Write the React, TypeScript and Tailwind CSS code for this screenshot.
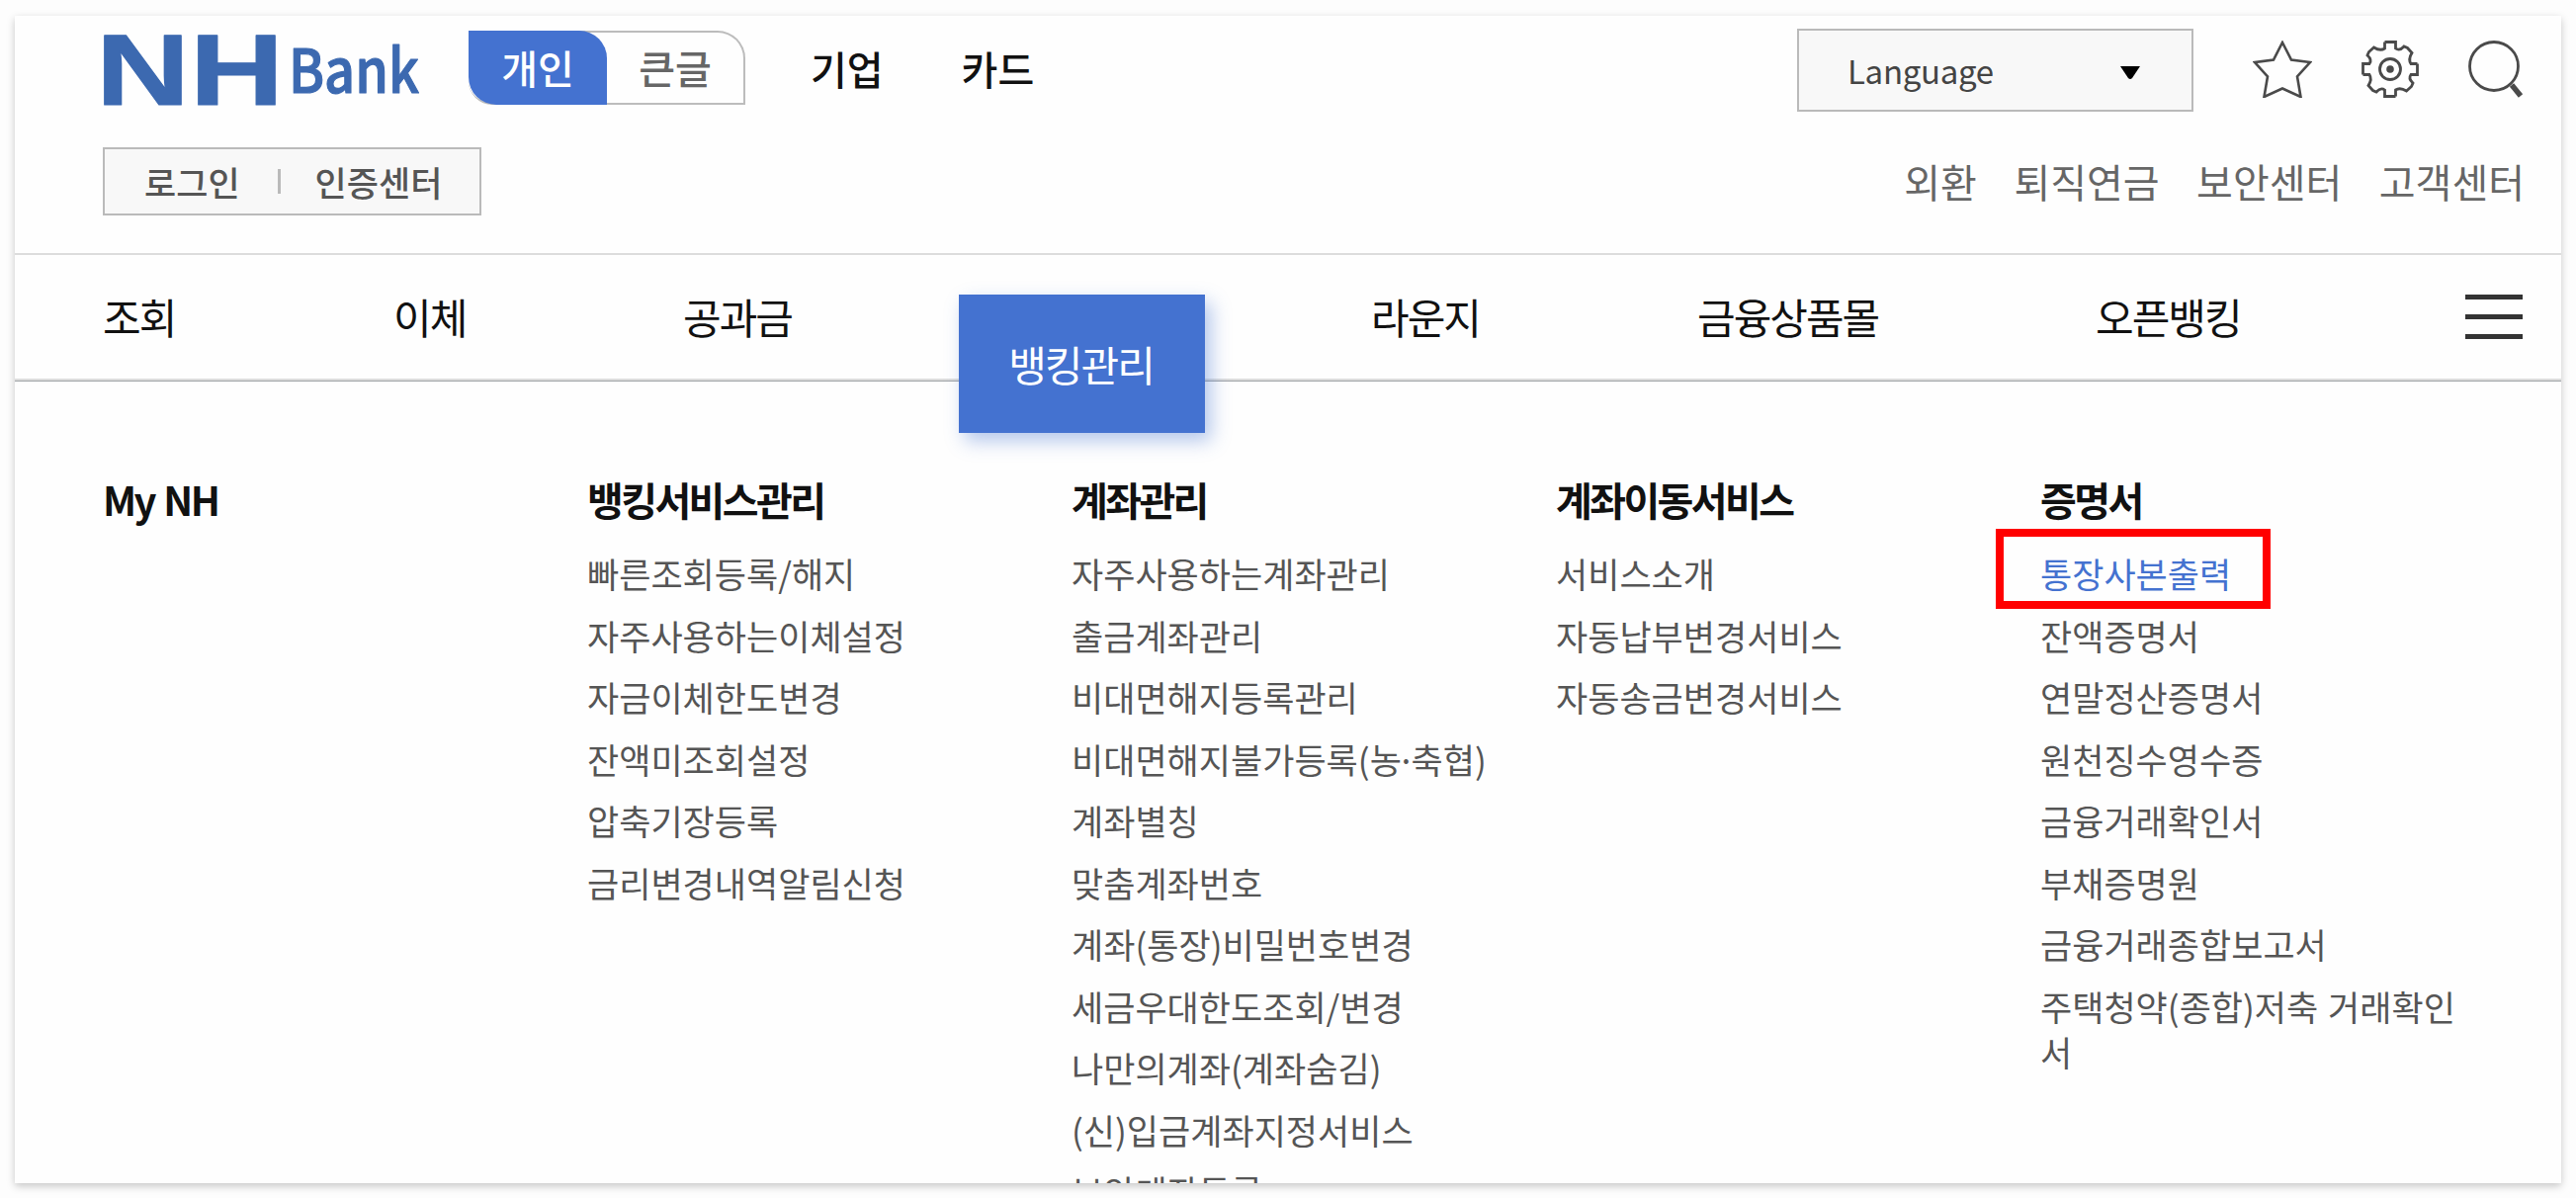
import React from 'react';

const lists = [
  { title: 'My NH', items: [] as string[] },
  {
    title: '뱅킹서비스관리',
    items: ['빠른조회등록/해지', '자주사용하는이체설정', '자금이체한도변경', '잔액미조회설정', '압축기장등록', '금리변경내역알림신청'],
  },
  {
    title: '계좌관리',
    items: [
      '자주사용하는계좌관리', '출금계좌관리', '비대면해지등록관리', '비대면해지불가등록(농·축협)', '계좌별칭', '맞춤계좌번호',
      '계좌(통장)비밀번호변경', '세금우대한도조회/변경', '나만의계좌(계좌숨김)', '(신)입금계좌지정서비스', '보안계좌등록',
    ],
  },
  { title: '계좌이동서비스', items: ['서비스소개', '자동납부변경서비스', '자동송금변경서비스'] },
  {
    title: '증명서',
    items: ['통장사본출력', '잔액증명서', '연말정산증명서', '원천징수영수증', '금융거래확인서', '부채증명원', '금융거래종합보고서', '주택청약(종합)저축 거래확인서'],
  },
];

function Logo() {
  return (
    <svg className="block h-[70px] w-[320px] overflow-visible" viewBox="0 0 320 70" fill="#3c69b0" stroke="#3c69b0" strokeLinejoin="round">
      <text x="-7" y="70" fontSize="101.7" textLength="190" lengthAdjust="spacingAndGlyphs" strokeWidth="1" className="font-['Liberation_Sans',sans-serif] font-bold">NH</text>
      <text x="188" y="57.5" fontSize="61" textLength="132" lengthAdjust="spacingAndGlyphs" strokeWidth="1.2" className="font-['Noto_Sans_CJK_KR',sans-serif] font-medium">Bank</text>
    </svg>
  );
}

const gearQuarter = 'M23.5 1.5H34.5V8Q38.5 11 43 6L46.5 7.5 51 12.5Q47 19 50 23.5H56.5';

function Gear() {
  return (
    <svg className="h-[58px] w-[58px]" viewBox="0 0 58 58" fill="none" stroke="#4a4a4a" strokeWidth="2.8">
      <path d={gearQuarter} />
      <path d={gearQuarter} transform="rotate(90 29 29)" />
      <path d={gearQuarter} transform="rotate(180 29 29)" />
      <path d={gearQuarter} transform="rotate(270 29 29)" />
      <circle cx="29" cy="29" r="10.5" />
      <circle cx="29" cy="29" r="3.8" fill="#4a4a4a" stroke="none" />
    </svg>
  );
}

function ItemText({ text }: { text: string }) {
  const [before, after] = text.split('·');
  if (after === undefined) return <>{text}</>;
  return (
    <>
      {before}
      <span className="-mx-[5px]">·</span>
      {after}
    </>
  );
}

export default function App() {
  return (
    <div className="h-[1212px] w-[2606px] overflow-hidden bg-[#fdfdfd] pl-[15px] pt-[16px] font-['Noto_Sans_CJK_KR',sans-serif] whitespace-nowrap">
      <div className="flex h-[1181px] w-[2576px] flex-col overflow-hidden bg-[#fefefe] shadow-[0_3px_8px_rgba(0,0,0,0.22)]">
        <header className="flex h-[240px] shrink-0 justify-between pl-[89px] pr-[38px]">
          <div>
            <div className="flex h-[90px] items-end">
              <Logo />
              <div className="ml-[50px] flex h-[75px] w-[280px] rounded-tr-[28px] border-2 border-l-0 border-[#bcbcbc] rounded-bl-[24px]">
                <div className="-my-0.5 flex w-[140px] items-center justify-center rounded-bl-[28px] rounded-tr-[28px] bg-[#4472d0] pb-0.5 text-[40px] font-medium leading-none text-white">개인</div>
                <div className="flex flex-1 items-center justify-center pb-0.5 text-[40px] font-medium leading-none text-[#666]">큰글</div>
              </div>
              <span className="ml-[66px] flex h-[75px] items-center text-[40px] font-medium leading-none text-[#111]">기업</span>
              <span className="ml-[79px] flex h-[75px] items-center text-[40px] font-medium leading-none text-[#111]">카드</span>
            </div>
            <div className="mt-[43px] flex h-[69px] w-[383px] items-center border-2 border-[#bababa] bg-[#f8f8f8] pl-[40px] text-[35px] font-medium leading-none text-[#555]">
              <span>로그인</span>
              <span className="ml-[38px] mr-[35px] h-[25px] w-[3px] bg-[#bababa]" />
              <span>인증센터</span>
            </div>
          </div>
          <div className="flex flex-col items-end">
            <div className="flex pt-[13px]">
              <div className="flex h-[84px] w-[401px] items-center border-2 border-[#bababa] bg-[#f8f8f8] pl-[49px] text-[33px] text-[#444]">
                <span className="w-[276px] pt-[1px] tracking-[-0.3px]">Language</span>
                <svg className="mt-[5px] h-[13px] w-5" viewBox="0 0 20 13"><path d="M0 0H20L12 12Q10 14 8 12Z" fill="#000" /></svg>
              </div>
              <div className="ml-[60px] mt-[12px] flex gap-[50px]">
                <svg className="h-[58px] w-[60px]" viewBox="0 0 60 58" fill="none" stroke="#4a4a4a" strokeWidth="2.6"><path d="M30 2L39 19.5 58 22 45 36.5 48.5 57 30 48.5 11.5 57 15 36.5 2 22 21 19.5Z" /></svg>
                <Gear />
                <svg className="h-[58px] w-[56px]" viewBox="0 0 56 58" fill="none" stroke="#4a4a4a" strokeWidth="2.8"><circle cx="26" cy="26" r="24.5" /><path d="M44 45L53 56" strokeWidth="5.5" /></svg>
              </div>
            </div>
            <div className="-mr-[1px] mt-[50px] flex gap-[37.5px] text-[40px] leading-none text-[#666]">
              <span>외환</span><span>퇴직연금</span><span>보안센터</span><span>고객센터</span>
            </div>
          </div>
        </header>
        <nav className="flex h-[129px] shrink-0 border-y-2 border-[#dcdcdc] shadow-[0_1px_0_#a0a4a8] pl-[89px] text-[42px] leading-[124px] tracking-[-2px] text-[#111]">
          <span className="w-[294px]">조회</span>
          <span className="w-[293px]">이체</span>
          <span className="w-[279px]">공과금</span>
          <span className="z-10 mt-[40px] h-[140px] w-[249px] shrink-0 bg-[#4472d0] pr-[2px] text-center leading-[140px] text-white shadow-[6px_8px_18px_rgba(68,114,208,0.4)]">뱅킹관리</span>
          <span className="ml-[168px] w-[330px]">라운지</span>
          <span className="w-[403px]">금융상품몰</span>
          <span className="w-[374px]">오픈뱅킹</span>
          <span className="mt-[40px] flex h-[45px] w-[58px] flex-col justify-between">
            <i className="h-[5px] bg-[#333]" /><i className="h-[5px] bg-[#333]" /><i className="h-[5px] bg-[#333]" />
          </span>
        </nav>
        <main className="flex pl-[89px] pt-[90px]">
          {lists.map((col, c) => (
            <section key={col.title} className="w-[490px] shrink-0">
              <h2 className="h-[60px] text-[40px] font-bold leading-[60px] tracking-[-2.6px] text-[#111] [word-spacing:3px]">{col.title}</h2>
              <ul className="mt-[22px] text-[35px] leading-[46px] text-[#555] [word-spacing:2px]">
                {col.items.map((item, i) => (
                  <li key={item} className={c === 4 && i === 0 ? 'relative mb-[16.5px] text-[#4472d0]' : 'mb-[16.5px] w-[430px] whitespace-normal break-all'}>
                    <ItemText text={item} />
                    {c === 4 && i === 0 && <span className="absolute -left-[45px] -top-[22px] h-[81px] w-[278px] border-8 border-[#f00]" />}
                  </li>
                ))}
              </ul>
            </section>
          ))}
        </main>
      </div>
    </div>
  );
}
